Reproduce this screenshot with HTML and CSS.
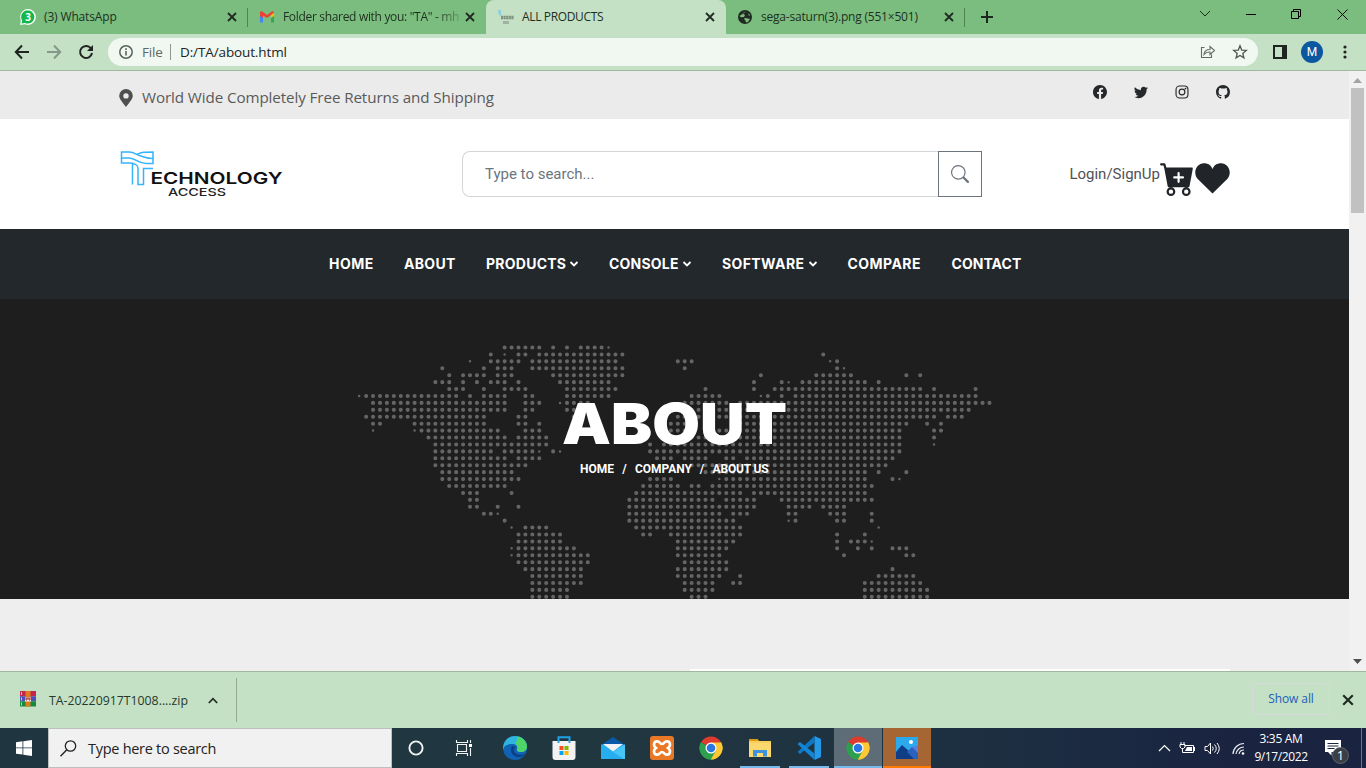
FILE: index.html
```html
<!DOCTYPE html>
<html lang="en">
<head>
<meta charset="utf-8">
<title>ALL PRODUCTS</title>
<link rel="stylesheet" href="styles.css">
</head>
<body>
<svg class="defs" width="0" height="0">
  <symbol id="close" viewBox="0 0 10 10"><path d="M1 1l8 8M9 1L1 9" stroke="#202a22" stroke-width="1.8"/></symbol>
  <symbol id="chev" viewBox="0 0 10 8"><path d="M1.500 2L5 5.500 8.500 2" fill="none" stroke="#fff" stroke-width="1.8"/></symbol>
  <symbol id="chrome" viewBox="0 0 24 24">
    <path d="M12 12L2.040 6.250A11.500 11.500 0 0 1 21.960 6.250z" fill="#dd3b2e"/>
    <path d="M12 12L21.960 6.250A11.500 11.500 0 0 1 12 23.500z" fill="#fcc934"/>
    <path d="M12 12V23.500A11.500 11.500 0 0 1 2.040 6.250z" fill="#2da04e"/>
    <path d="M12 6.500H22.100A11.500 11.500 0 0 1 12 23.500L16.800 14.700z" fill="#fcc934"/>
    <path d="M7.300 14.700L12 17.500 16.800 14.800 11.800 23.500A11.500 11.500 0 0 1 2.040 6.250z" fill="#2da04e"/>
    <circle cx="12" cy="12" r="5.500" fill="#fff"/><circle cx="12" cy="12" r="4.300" fill="#2b76e5"/>
  </symbol>
</svg>

<div class="tabs">
  <div class="tab">
    <svg class="fav" viewBox="0 0 16 16"><circle cx="8" cy="8" r="7.900" fill="#fff"/><path d="M.2 16L1 10l5 5z" fill="#fff"/><path d="M1.500 14.600l.7-3A6.600 6.600 0 1 1 5 14z" fill="#12b84c"/><text x="8" y="11.500" text-anchor="middle" class="fav-num">3</text></svg>
    <span class="tab-title w1">(3) WhatsApp</span><svg class="x"><use href="#close"/></svg>
  </div>
  <div class="tab lined">
    <svg class="fav" viewBox="0 0 16 16"><path d="M1 4v9.500h3V6z" fill="#4285f4"/><path d="M12 6v7.500h3V4z" fill="#34a853"/><path d="M12 4l3-1v4l-3 2z" fill="#fbbc04"/><path d="M1 3.500C1 2 3 2 4 3l4 3 4-3c1-1 3-1 3 .5L12 6 8 9 4 6.500 4 9 1 7z" fill="#ea4335"/></svg>
    <span class="tab-title w2">Folder shared with you: "TA" - mh</span><svg class="x shift"><use href="#close"/></svg>
  </div>
  <div class="tab active">
    <svg class="fav" viewBox="0 0 16 16"><path d="M0 1h3v6l-2-1z" fill="#86cfe0"/><path d="M3 7.500h13M3 9.500h13" stroke="#77887a" stroke-width="1.500" stroke-dasharray="2 .6"/><path d="M3 8.500h13" stroke="#94a696"/><path d="M5 13.500h6" stroke="#a0b2a2" stroke-width="3"/></svg>
    <span class="tab-title w3">ALL PRODUCTS</span><svg class="x"><use href="#close"/></svg>
  </div>
  <div class="tab">
    <svg class="fav" viewBox="0 0 16 16"><circle cx="8" cy="8" r="7" fill="#202a22"/><path d="M9 2.500c-2 .5-3 1-2.500 2.500L8 6l-1 2-3 .2L2.500 7M8 9l3 .5 2 .5-2 3-2 .5-.5-2L7 10zM11 4l2 2-1 1z" fill="#7bbd7e"/></svg>
    <span class="tab-title w4">sega-saturn(3).png (551×501)</span><svg class="x"><use href="#close"/></svg>
  </div>
  <div class="newtab"><svg width="12" height="12"><path d="M6 0v12M0 6h12" stroke="#1d261f" stroke-width="2"/></svg></div>
  <div class="winctl">
    <svg width="12" height="8"><path d="M1 1l5 5 5-5" fill="none" stroke="#16301a"/></svg>
    <svg width="10" height="10"><path d="M0 5.500h10" stroke="#000"/></svg>
    <svg width="11" height="11"><path d="M.5 2.500h7v7h-7zM2.500 2.500v-2h7v7h-2" fill="none" stroke="#000"/></svg>
    <svg width="11" height="11"><path d="M.5.5l10 10M10.500.5l-10 10" stroke="#000"/></svg>
  </div>
</div>

<div class="toolbar">
  <svg class="back" width="16" height="16"><path d="M15 8H2M8 1.500L1.800 8 8 14.500" fill="none" stroke="#1f2420" stroke-width="2"/></svg>
  <svg class="fwd" width="16" height="16"><path d="M1 8h13M8 1.500L14.200 8 8 14.500" fill="none" stroke="#84978a" stroke-width="2"/></svg>
  <svg class="reload" width="16" height="16"><path d="M13 4.500A6 6 0 1 0 14 9" fill="none" stroke="#1f2420" stroke-width="2"/><path d="M15 1v6H9z" fill="#1f2420"/></svg>
  <div class="omni">
    <svg width="14" height="14"><circle cx="7" cy="7" r="6.200" fill="none" stroke="#5a625c" stroke-width="1.500"/><path d="M7 6v4.500M7 3.300v1.600" stroke="#5a625c" stroke-width="1.600"/></svg>
    <span class="scheme">File</span><span class="bar"></span><span class="url">D:/TA/about.html</span>
    <svg class="share" width="16" height="16"><path d="M4.500 3.500H1.500v10h10V10.500M4 10.500c.3-3.500 2.500-5 6-5V2.500l4.500 4-4.500 4V8c-2.500-.2-4.500.5-6 2.500z" fill="none" stroke="#616b63" stroke-width="1.100"/></svg>
    <svg class="star" width="16" height="16"><path d="M8 1.800l1.700 4.300 4.600.3-3.500 3 1.100 4.500L8 11.400l-3.900 2.500 1.100-4.500-3.500-3 4.600-.3z" fill="none" stroke="#4d564f" stroke-width="1.300"/></svg>
  </div>
  <svg class="panel" width="14" height="14"><path d="M1 1h12v12H1z" fill="none" stroke="#1f2420" stroke-width="2"/><path d="M9 1h4v12H9z" fill="#1f2420"/></svg>
  <span class="avatar">M</span>
  <svg class="dots" width="4" height="14"><circle cx="2" cy="2" r="1.600"/><circle cx="2" cy="7" r="1.600"/><circle cx="2" cy="12" r="1.600"/></svg>
</div>

<div class="view">
  <div class="page">
    <div class="topbar">
      <svg class="pin" width="14" height="18"><path fill-rule="evenodd" d="M7 0a6.800 6.800 0 0 1 6.800 6.800C13.800 10 10 14 7 18 4 14 .2 10 .2 6.800A6.800 6.800 0 0 1 7 0zm0 4.200a2.700 2.700 0 1 0 0 5.400 2.700 2.700 0 0 0 0-5.400z" fill="#4f4f4f"/></svg>
      <span class="ship">World Wide Completely Free Returns and Shipping</span>
      <div class="social">
        <svg viewBox="0 0 16 16"><path d="M16 8.049c0-4.446-3.582-8.050-8-8.050C3.580 0-.002 3.603-.002 8.050c0 4.017 2.926 7.347 6.750 7.951v-5.625h-2.030V8.050H6.750V6.275c0-2.017 1.195-3.131 3.022-3.131.876 0 1.791.157 1.791.157v1.980h-1.009c-.993 0-1.303.621-1.303 1.258v1.510h2.218l-.354 2.326H9.250V16c3.824-.604 6.750-3.934 6.750-7.951z"/></svg>
        <svg viewBox="0 0 16 16"><path d="M5.026 15c6.038 0 9.341-5.003 9.341-9.334 0-.14 0-.282-.006-.422A6.685 6.685 0 0 0 16 3.542a6.658 6.658 0 0 1-1.889.518 3.301 3.301 0 0 0 1.447-1.817 6.533 6.533 0 0 1-2.087.793A3.286 3.286 0 0 0 7.875 6.030a9.325 9.325 0 0 1-6.767-3.429 3.289 3.289 0 0 0 1.018 4.382A3.323 3.323 0 0 1 .64 6.575v.045a3.288 3.288 0 0 0 2.632 3.218 3.203 3.203 0 0 1-.865.115 3.230 3.230 0 0 1-.614-.057 3.283 3.283 0 0 0 3.067 2.277A6.588 6.588 0 0 1 .78 13.580a6.320 6.320 0 0 1-.78-.045A9.344 9.344 0 0 0 5.026 15z"/></svg>
        <svg viewBox="0 0 16 16"><rect x="1.200" y="1.200" width="13.600" height="13.600" rx="4" fill="none" stroke="#26292b" stroke-width="1.300"/><circle cx="8" cy="8" r="3.300" fill="none" stroke="#26292b" stroke-width="1.300"/><circle cx="12" cy="4" r="1"/></svg>
        <svg viewBox="0 0 16 16"><path d="M8 0C3.580 0 0 3.580 0 8c0 3.540 2.290 6.530 5.470 7.590.4.07.55-.17.55-.38 0-.19-.01-.82-.01-1.490-2.010.37-2.530-.49-2.690-.94-.09-.23-.48-.94-.82-1.130-.28-.15-.68-.52-.01-.53.63-.01 1.080.58 1.230.82.72 1.210 1.870.87 2.330.66.07-.52.28-.87.51-1.070-1.780-.2-3.640-.89-3.640-3.950 0-.87.31-1.590.82-2.150-.08-.2-.36-1.020.08-2.120 0 0 .67-.21 2.200.82.64-.18 1.320-.27 2-.27.68 0 1.360.09 2 .27 1.530-1.040 2.200-.82 2.200-.82.44 1.100.16 1.920.08 2.120.51.56.82 1.270.82 2.150 0 3.070-1.870 3.750-3.650 3.950.29.25.54.73.54 1.480 0 1.070-.01 1.930-.01 2.200 0 .21.15.46.55.38A8.012 8.012 0 0 0 16 8c0-4.420-3.580-8-8-8z"/></svg>
      </div>
    </div>

    <div class="header">
      <svg class="logo" width="166" height="50" viewBox="0 0 166 50">
        <g fill="none" stroke="#35b4fb" stroke-width="1.500" transform="translate(1 0)">
          <path d="M1.500 2H9C15 2 16 5 21 6c6 2 6 2.500 12 2.500V13.500H26C18 13.500 16 8 9 8H1.500z"/>
          <path d="M17 4.500C22 2 24 2 33 2v6.500M1.500 8v5H9c5 0 9 2 9 5V34.500H23.500V18.500H33M12.500 34.500V13.500"/>
        </g>
        <text class="logo-a" x="31.500" y="34" textLength="132" lengthAdjust="spacingAndGlyphs">ECHNOLOGY</text>
        <text class="logo-b" x="49" y="46" textLength="58" lengthAdjust="spacingAndGlyphs">ACCESS</text>
      </svg>
      <div class="search"><span class="field">Type to search...</span>
        <span class="go"><svg width="18" height="18" viewBox="0 0 16 16"><path fill="#6c757d" d="M11.742 10.344a6.500 6.500 0 1 0-1.397 1.398h-.001c.03.04.062.078.098.115l3.850 3.850a1 1 0 0 0 1.415-1.414l-3.850-3.850a1.007 1.007 0 0 0-.115-.1zM12 6.500a5.500 5.500 0 1 1-11 0 5.500 5.500 0 0 1 11 0z"/></svg></span></div>
      <div class="account"><span class="login">Login/SignUp</span>
        <svg width="35" height="35" viewBox="0 0 16 16"><path fill="#212529" d="M.5 1a.5.5 0 0 0 0 1h1.110l.401 1.607 1.498 7.985A.5.5 0 0 0 4 12h1a2 2 0 1 0 0 4 2 2 0 0 0 0-4h7a2 2 0 1 0 0 4 2 2 0 0 0 0-4h1a.5.5 0 0 0 .491-.408l1.500-8A.5.5 0 0 0 14.500 3H2.890l-.405-1.621A.5.5 0 0 0 2 1H.5zM6 14a1 1 0 1 1-2 0 1 1 0 0 1 2 0zm7 0a1 1 0 1 1-2 0 1 1 0 0 1 2 0zM9 5.500V7h1.500a.5.5 0 0 1 0 1H9v1.500a.5.5 0 0 1-1 0V8H6.500a.5.5 0 0 1 0-1H8V5.500a.5.5 0 0 1 1 0z"/></svg>
        <svg width="35" height="35"><path fill="#212529" d="M17.500 32.500L2.500 17.800C-2.500 11.500 1.500 2.300 9 2.300c4 0 7.300 2 8.500 6 1.200-4 4.500-6 8.500-6 7.500 0 11.500 9.200 6.500 15.500z"/></svg>
      </div>
    </div>

    <div class="nav">
      <span class="n1">HOME</span><span class="n2">ABOUT</span>
      <span class="n3">PRODUCTS<svg><use href="#chev"/></svg></span><span class="n4">CONSOLE<svg><use href="#chev"/></svg></span><span class="n5">SOFTWARE<svg><use href="#chev"/></svg></span>
      <span class="n6">COMPARE</span><span class="n7">CONTACT</span>
    </div>

    <div class="hero">
      <!-- One unit per grid cell; each run is a dashed line whose zero-length dashes become round dots. -->
      <svg class="map" width="1349" height="300">
        <g transform="translate(359.200 48.500) scale(6.926)">
          <path class="dot" d="M21 0h5.100M28 0h.1M30 0h.1M32 0h3.100
M19 1h.1M23 1h1.100M26 1h12.100M67 1h.1
M19 2h4.100M25 2h12.100M46 2h2.100M69 2h.1
M12 3h.1M18 3h.1M20 3h2.100M25 3h13.100M47 3h.1M69 3h.1
M13 4h.1M15 4h3.100M20 4h2.100M28 4h10.100M58 4h.1M66 4h5.100M79 4h.1M81 4h.1
M11 5h2.100M15 5h.1M17 5h.1M19 5h2.100M23 5h.1M29 5h7.100M57 5h.1M61 5h.1M64 5h9.100M75 5h.1
M13 6h2.100M18 6h.1M21 6h3.100M30 6h7.100M50 6h.1M57 6h.1M60 6h21.100M83 6h.1M89 6h.1
M1 7h13.100M16 7h.1M18 7h3.100M24 7h1.100M30 7h6.100M48 7h4.100M59 7h.1M61 7h.1M63 7h26.100
M2 8h19.100M24 8h2.100M30 8h3.100M47 8h6.100M55 8h36.100
M2 9h19.100M24 9h1.100M30 9h1.100M47 9h41.100
M1 10h17.100M23 10h1.100M31 10h.1M46 10h37.100M85 10h2.100
M2 11h1.100M8 11h10.100M23 11h1.100M26 11h.1M45 11h3.100M54 11h25.100M82 11h.1M84 11h.1
M9 12h11.100M24 12h2.100M45 12h3.100M51 12h27.100M83 12h1.100
M10 13h11.100M23 13h4.100M44 13h34.100M83 13h.1
M11 14h16.100M42 14h.1M44 14h34.100
M11 15h8.100M21 15h4.100M28 15h.1M42 15h36.100
M11 16h10.100M23 16h3.100M43 16h2.100M47 16h3.100M53 16h1.100M56 16h21.100
M11 17h13.100M48 17h28.100
M12 18h10.100M50 18h23.100M75 18h.1M79 18h.1
M12 19h11.100M42 19h3.100M53 19h20.100M77 19h.1
M13 20h8.100M41 20h5.100M48 20h1.100M51 20h23.100
M15 21h2.100M22 21h.1M40 21h15.100M57 21h16.100
M16 22h1.100M39 22h12.100M53 22h4.100M61 22h13.100
M16 23h1.100M20 23h.1M23 23h.1M39 23h18.100M62 23h3.100M67 23h3.100
M18 24h1.100M39 24h13.100M54 24h2.100M62 24h1.100M68 24h2.100M74 24h.1
M21 25h.1M39 25h15.100M63 25h.1M69 25h1.100M74 25h.1
M24 26h3.100M40 26h15.100
M23 27h6.100M41 27h1.100M45 27h10.100M69 27h.1M73 27h.1
M23 28h6.100M46 28h8.100M69 28h.1M71 28h2.100
M23 29h8.100M46 29h7.100M69 29h.1M72 29h.1M74 29h.1M77 29h2.100
M23 30h10.100M46 30h6.100M70 30h.1M79 30h1.100
M23 31h10.100M47 31h6.100
M24 32h8.100M46 32h7.100M77 32h.1
M25 33h7.100M46 33h6.100M55 33h.1M75 33h5.100
M25 34h7.100M47 34h4.100M54 34h1.100M73 34h8.100
M25 35h5.100M47 35h4.100M73 35h9.100
M25 36h5.100M48 36h2.100M73 36h9.100"/>
          <path class="dot small" d="M36 0h.1M21 1h.1M16 2h.1M68 2h.1M70 3h.1M62 5h.1M0 7h.1M58 7h.1M29 8h.1M2 12h.1M8 12h.1M83 14h.1M26 15h.1M29 15h.1M52 19h.1M78 19h.1M20 24h.1M62 25h.1M22 26h.1M75 26h.1M74 28h.1M22 29h.1M22 30h.1"/>
        </g>
        <text class="title" x="562" y="145" textLength="225" lengthAdjust="spacingAndGlyphs">ABOUT</text>
      </svg>
      <div class="crumbs"><span class="c1">HOME</span><i>/</i><span class="c2">COMPANY</span><i>/</i><span class="c3">ABOUT US</span></div>
    </div>
    <div class="below"><div class="card"></div></div>
  </div>
  <div class="scroll"><svg width="9" height="5"><path d="M4.500 0L9 5H0z" fill="#a3a3a3"/></svg><div class="thumb"></div><svg class="down" width="9" height="5"><path d="M4.500 5L9 0H0z" fill="#505050"/></svg></div>
</div>

<div class="shelf">
  <svg class="rar" width="16" height="16"><path d="M0 0h16v5.300H0z" fill="#c2274f"/><path d="M0 5.300h16v5H0z" fill="#4a50b8"/><path d="M0 10.300h16V15.500H0z" fill="#168a3c"/><path d="M5.500 0h5v15.500h-5z" fill="#e07a1c"/><path d="M5 6h6v4.500H5z" fill="#eee"/><path d="M6 6v3h1V7h2v2h1V6" fill="none" stroke="#b02a20"/><path d="M1.500 1v3M1.500 6.500v3M1.500 11.500v3" stroke="#f0d060"/></svg>
  <span class="file">TA-20220917T1008....zip</span>
  <svg class="up" width="10" height="7"><path d="M.8 6L5 1.700 9.200 6" fill="none" stroke="#1f2a21" stroke-width="1.700"/></svg>
  <span class="rule"></span>
  <span class="showall"><b>Show all</b></span>
  <svg class="x big"><use href="#close"/></svg>
</div>

<div class="taskbar">
  <div class="start"><svg width="16" height="16"><path d="M0 2.200l6.500-.9v6.200H0zM7.300 1.200L16 0v7.500H7.300zM0 8.300h6.500v6.300L0 13.700zM7.300 8.300H16V16l-8.700-1.200z" fill="#fff"/></svg></div>
  <div class="tsearch"><svg width="17" height="17"><circle cx="10.500" cy="6" r="5.200" fill="none" stroke="#222" stroke-width="1.300"/><path d="M6.800 9.800L.5 16.300" stroke="#222" stroke-width="1.400"/></svg><span>Type here to search</span></div>
  <div class="app"><svg class="nudge" width="18" height="18"><circle cx="9" cy="9" r="6.600" fill="none" stroke="#f2f4f5" stroke-width="1.900"/></svg></div>
  <div class="app"><svg class="nudge wide" width="18" height="16"><path d="M2.500 4.500h9v7h-9zM1.500 0v2.500h11V0M1.500 16v-2.500h11V16M15.500 0v3M15.500 8v8" fill="none" stroke="#f2f4f5" stroke-width="1.100"/><path d="M14 4h3v3h-3z" fill="#fff"/></svg></div>
  <div class="app"><svg width="24" height="24">
    <circle cx="12" cy="12" r="12" fill="#0f62b4"/><path d="M0 11C1 4 6 0 12 0c7 0 12 5 12 10.500 0 4-3 5.500-6 5.500-3 0-4.500-1-4-2.500C15 11 14 8 9.500 8 5 8 1 9 0 14z" fill="#2fb5e0"/><path d="M15 .4C20.500 2 24 6 24 10.500c0 4-3 5.500-6 5.500-3 0-4.500-1-4-2.500 1-2 .5-4-1.500-5.200z" fill="#4fd468"/><path d="M9 10c-3 6 1 11 7 11 3 0 5-1.500 6-3-3 1.500-11 1.500-11-4 0-1.800 1-2.500 1.500-3z" fill="#0b3f86"/></svg></div>
  <div class="app"><svg width="24" height="24"><path d="M6.500 6V1.200h11V6" fill="none" stroke="#1fa3e8" stroke-width="2"/><path d="M.5 5h23v16a3 3 0 0 1-3 3h-17a3 3 0 0 1-3-3z" fill="#f2f2f2"/><path d="M6.500 5v2M17.500 5v2" stroke="#1fa3e8" stroke-width="2"/><path d="M7.500 10H11.500v4h-4z" fill="#f25022"/><path d="M12.500 10h4v4h-4z" fill="#7fba00"/><path d="M7.500 15h4v4h-4z" fill="#00a4ef"/><path d="M12.500 15h4v4h-4z" fill="#ffb900"/></svg></div>
  <div class="app"><svg width="24" height="24"><path d="M0 9L12 1l12 8z" fill="#0a58a8"/><path d="M0 8.500h24V23H0z" fill="#27aef0"/><path d="M24 8.500V23H23L12 16z" fill="#46c6f7"/><path d="M2 8h20L12 15.500z" fill="#f0f2f6"/></svg></div>
  <div class="app"><svg width="24" height="24"><rect width="24" height="24" rx="3" fill="#e97826"/><path d="M8 5.500c-4-1-5.500 4-2 6.500-3.500 2.500-2 7.500 2 6.500 2-.5 2-2.500 4-2.500s2 2 4 2.500c4 1 5.500-4 2-6.500 3.500-2.500 2-7.500-2-6.500-2 .5-2 2.500-4 2.500s-2-2-4-2.500z" fill="none" stroke="#fff" stroke-width="2.600"/></svg></div>
  <div class="app"><svg width="24" height="24"><use href="#chrome"/></svg></div>
  <div class="app open"><svg width="22" height="20"><path d="M0 1h8l2 2h12v16H0z" fill="#f8cf5c"/><path d="M0 1h8.500l1.500 2H0z" fill="#dd9b12"/><path d="M0 5h22v14H0z" fill="#fbd96e"/><path d="M4 18.500V12h14v6.500h-4V15H8v3.500z" fill="#3f93dc"/></svg></div>
  <div class="app open"><svg width="24" height="24"><path d="M17.500 0L24 3v18l-6.500 3z" fill="#2499e8"/><path d="M17.500 0v6.500L3 18 .5 16z" fill="#0c78c6"/><path d="M17.500 24v-6.500L3 6 .5 8z" fill="#1385d6"/></svg></div>
  <div class="app open cur"><svg width="24" height="24"><use href="#chrome"/></svg></div>
  <div class="app photo"><svg width="22" height="22"><path d="M0 0h22v22H0z" fill="#2ba9ec"/><path d="M14 11l8-3v14z" fill="#5d7de0"/><path d="M0 15l6-7 16 14H0z" fill="#0f3e86"/><path d="M11 15l5-5 6 6v6h-4z" fill="#2b62c0"/><circle cx="15" cy="5" r="2" fill="#fff"/></svg></div>
  <div class="tray">
    <svg width="13" height="8"><path d="M1 7l5.500-5.500L12 7" fill="none" stroke="#fff" stroke-width="1.200"/></svg>
    <svg width="17" height="12"><path d="M5.500 3.500h9v7H3.500V7M2 0v2M5 0v2M1 2.500h5V5L4.500 6.500h-2L1 5zM15.500 5v4" fill="none" stroke="#fff"/><path d="M8 5h5v4H6z" fill="#fff"/></svg>
    <svg width="17" height="13"><path d="M1 4.500h2.500L6.500 1v11L3.500 8.500H1z" fill="none" stroke="#fff"/><path d="M8.500 4.500q1.500 2 0 4M10.500 2.500q3.500 4 0 8M13 1q4.500 5.500 0 11" fill="none" stroke="#fff"/></svg>
    <svg class="wifi" width="13" height="13"><path d="M1 12A11 11 0 0 1 12 1.500M4 12A8 8 0 0 1 12 5M7 12A5 5 0 0 1 12 8" fill="none" stroke="#e8eaf0" stroke-width="1.200"/><circle cx="11" cy="11.500" r="1.300" fill="#fff"/></svg>
    <div class="clock"><span class="time">3:35 AM</span><span class="date">9/17/2022</span></div>
    <div class="note"><svg width="24" height="24"><path d="M0 0h16v12H6.500v3.500L3 12H0z" fill="#fff"/><path d="M2.500 3.500h11M2.500 6h11M2.500 8.500h7" stroke="#1b2742"/><circle cx="15.500" cy="15.500" r="8" fill="#3b3f45" stroke="#6b7078" stroke-width=".8"/><text x="15.500" y="20" text-anchor="middle" class="num">1</text></svg></div>
    <span class="peek"></span>
  </div>
</div>
</body>
</html>
```
FILE: styles.css
```css
* { box-sizing: border-box; }
body { margin: 0; width: 1366px; height: 768px; overflow: hidden; display: flex; flex-direction: column; background: #c5e1c5; font-family: "Open Sans", sans-serif; }
svg { display: block; flex: none; }
.defs { position: absolute; }
span { white-space: nowrap; }

.tabs { height: 34px; background: #7bbd7e; display: flex; padding-left: 8px; flex: none; }
.tab { width: 239px; display: flex; align-items: center; padding: 0 10px 0 12px; }
.tab.lined { background: linear-gradient(#4f8453, #4f8453) 0 8px / 1px 19px no-repeat; }
.tab.active { width: 240px; padding-right: 11px; margin-right: -1px; background: #c5e1c5; border-radius: 8px 8px 0 0; }
.fav { width: 16px; height: 16px; margin-right: 8px; }
.fav-num { font: bold 10px "Open Sans", sans-serif; fill: #fff; }
.tab-title { font-size: 12px; line-height: 18px; margin-top: -1px; color: #1d301f; flex: 1; }
.x { width: 10px; height: 10px; }
.shift { margin-right: 1px; }
.big { width: 12px; height: 12px; }
.w1 { letter-spacing: -.15px; }
.w2 { letter-spacing: -.32px; margin-right: 6px; -webkit-mask-image: linear-gradient(90deg, #000 152px, transparent 184px); }
.w3 { letter-spacing: -.35px; }
.w4 { letter-spacing: -.2px; }
.newtab { width: 40px; padding-left: 17px; display: flex; align-items: center; background: linear-gradient(#4f8453, #4f8453) 0 8px / 1px 19px no-repeat; }
.winctl { margin-left: auto; height: 28px; display: flex; align-items: center; gap: 35px; padding-right: 18px; }

.toolbar { height: 37px; display: flex; align-items: center; flex: none; border-bottom: 1px solid #a0b8a0; padding-left: 14px; }
.fwd, .reload { margin-left: 16px; }
.omni { width: 1150px; height: 28px; margin-left: 14px; border-radius: 14px; background: #f1f8f1; display: flex; align-items: center; padding: 0 10px 0 11px; font-size: 13.500px; }
.scheme { margin-left: 9px; color: #5f6861; letter-spacing: -.2px; width: 21px; }
.bar { width: 1px; height: 16px; background: #8d9890; margin: 0 9px 0 7px; }
.url { color: #202521; letter-spacing: -.12px; }
.share { margin-left: auto; }
.star { margin-left: 16px; }
.panel { margin-left: 15px; }
.avatar { width: 22px; height: 22px; border-radius: 50%; background: #0b57a0; color: #fff; font: 400 12px/22px Roboto, sans-serif; text-align: center; margin-left: 14px; }
.dots { margin-left: 20px; fill: #1f2420; }

.view { height: 600px; display: flex; flex: none; }
.page { width: 1349px; display: flex; flex-direction: column; }
.topbar { height: 48px; background: #ebebeb; display: flex; padding: 0 119px; }
.pin { margin-top: 18px; }
.ship { margin-left: 9px; line-height: 52px; font-size: 15.200px; letter-spacing: -.1px; color: #5a5a5a; }
.social { margin-left: auto; display: flex; gap: 27px; padding-top: 14px; }
.social svg { width: 14px; height: 14px; fill: #26292b; }

.header { height: 110px; background: #fff; display: flex; padding: 32px 119px 0; }
.logo { margin-top: -1px; }
.logo-a { font: 600 16px Inter, sans-serif; fill: #111; }
.logo-b { font: 500 11px Inter, sans-serif; fill: #222; }
.search { width: 520px; height: 46px; margin-left: 177px; display: flex; font: 15px/44px Roboto, sans-serif; color: #6c757d; }
.field { flex: 1; border: 1px solid #d3d6d9; border-right: 0; border-radius: 8px 0 0 8px; padding-left: 22px; }
.go { width: 44px; border: 1px solid #6c757d; display: flex; align-items: center; justify-content: center; }
.account { margin-left: auto; display: flex; height: 46px; padding-top: 10px; }
.login { font: 15px/27px Roboto, sans-serif; color: #4f5255; }

.nav { height: 70px; background: #22282c; display: flex; align-items: center; padding: 0 0 1px 329px; gap: 30px; font: 700 14px Inter, sans-serif; color: #fff; }
.nav span { display: flex; justify-content: space-between; align-items: center; }
.nav svg { width: 10px; height: 8px; }
.n1 { width: 45px; letter-spacing: .5px; }
.n2 { width: 52px; letter-spacing: .3px; }
.n3 { width: 93px; letter-spacing: .25px; }
.n4 { width: 83px; letter-spacing: .2px; }
.n5 { width: 95.500px; letter-spacing: .4px; }
.n6 { width: 74px; letter-spacing: .45px; }
.n7 { width: 70px; letter-spacing: .05px; }

.hero { height: 300px; background: #1e1e1e; display: grid; }
.map, .crumbs { grid-area: 1 / 1; }
.dot { fill: none; stroke: #666565; stroke-width: .59; stroke-linecap: round; stroke-dasharray: 0 1; }
.small { stroke-width: .36; }
.title { font: 900 57px Inter, sans-serif; fill: #fff; }
.crumbs { z-index: 1; padding: 162px 0 0 580px; display: flex; font: 700 12px/16px Roboto, sans-serif; color: #fff; height: 178px; }
.crumbs i { font-style: normal; width: 20px; padding-right: 1px; text-align: center; }
.c1 { width: 35px; }
.c2 { width: 57.500px; letter-spacing: -.05px; }
.c3 { letter-spacing: -.15px; }
.below { flex: 1; background: #eee; padding: 70px 119px 0 690px; }
.card { height: 2px; background: #fff; }
.scroll { width: 17px; background: #f1f1f1; display: flex; flex-direction: column; align-items: center; padding-top: 7px; }
.thumb { width: 13px; height: 125px; margin-top: 5px; background: #c1c1c1; }
.down { margin-top: auto; margin-bottom: 7px; }

.shelf { height: 57px; border-top: 1px solid #a0b8a0; display: flex; align-items: center; flex: none; padding: 0 12px 0 20px; }
.rar { margin-top: -2px; }
.file { font-size: 12.300px; color: #26382a; margin-left: 13px; width: 139px; }
.up { margin-left: 20px; }
.rule { width: 1px; height: 44px; background: #93aa94; margin-left: 18px; }
.showall { width: 78px; height: 32px; border: 1px solid #d6dadc; border-radius: 4px; margin: -2px 12px 0 auto; text-align: center; line-height: 30px; font-size: 12px; color: #2160b8; }
.showall b { font-weight: 500; letter-spacing: -.1px; }

.taskbar { height: 40px; background: linear-gradient(90deg, #1f3640 0, #213740 45%, #1d3041 70%, #1a2441 90%, #1a2340 100%); display: flex; flex: none; }
.start { width: 48px; display: flex; align-items: center; justify-content: center; }
.tsearch { width: 344px; margin-right: 1px; background: #f1f1f1; border: 1px solid #bcbfc0; display: flex; align-items: center; padding-left: 11px; gap: 11px; font-size: 14.500px; color: #222; letter-spacing: -.28px; }
.app { width: 48px; margin-right: 1px; display: flex; align-items: center; justify-content: center; border-bottom: 2px solid transparent; border-top: 2px solid transparent; }
.nudge { margin-left: -2px; }
.wide { margin-left: -4px; }
.open { width: 40px; margin: 0 5px 0 4px; border-bottom-color: #76b9ed; }
.cur { width: 48px; margin: 0 1px 0 0; background: #5d6c76; border-top-color: #5d6c76; }
.photo { background: #a56633; border-top-color: #a56633; border-bottom-color: #ff7b00; }
.tray { margin-left: auto; display: flex; align-items: center; gap: 8px; color: #fff; }
.wifi { margin-left: 3px; }
.clock { width: 52px; margin-left: 2px; display: flex; flex-direction: column; align-items: center; font-size: 12px; line-height: 18px; }
.time { letter-spacing: -.3px; }
.date { letter-spacing: -.4px; }
.note { margin: 0 4px 0 10px; width: 24px; padding-top: 7px; }
.num { font: 13px "Open Sans", sans-serif; fill: #fff; }
.peek { width: 5px; height: 40px; border-left: 1px solid #6e778c; }
```
